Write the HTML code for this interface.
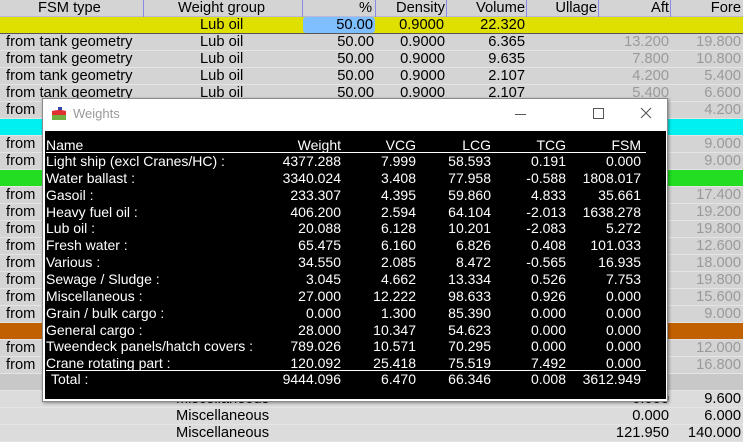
<!DOCTYPE html>
<html><head><meta charset="utf-8"><style>
*{margin:0;padding:0;box-sizing:border-box}
body{width:743px;height:441px;overflow:hidden;background:#d4d4d4;font-family:"Liberation Sans",Arial,sans-serif;font-size:14.7px;color:#000;position:relative}
.r{position:absolute;left:0;width:743px;height:17px;background:#d4d4d4;border-bottom:1px solid #e4e4e4}
.r span{position:absolute;top:0;line-height:16px;white-space:nowrap}
.g{color:#9a9a9a}
.hd{background:#d4d4d4;border-bottom:1px solid #b8b8d8}
.vl{position:absolute;top:0;height:17px;width:1px;background:#8a8ae0}
.dlg{position:absolute;left:42px;top:98px;width:626px;height:304px;background:#fff;border:1px solid #8a8a8a;box-shadow:1px 1px 3px rgba(0,0,0,.4)}
.blk{position:absolute;left:2px;top:32px;width:621px;height:268px;background:#000;color:#fff;font-size:14px}
.blk div{position:absolute;left:0;width:621px;height:17px;line-height:16px}
.blk span{position:absolute;white-space:nowrap}
</style></head><body>

<div class="r hd" style="top:0"><span style="left:38px">FSM type</span><span style="left:178px">Weight group</span><span style="right:371px">%</span><span style="right:298px">Density</span><span style="right:218px">Volume</span><span style="right:146px">Ullage</span><span style="right:74px">Aft</span><span style="right:2px">Fore</span>
<div class="vl" style="left:143px"></div><div class="vl" style="left:302px"></div><div class="vl" style="left:375px"></div><div class="vl" style="left:446px"></div><div class="vl" style="left:526px"></div><div class="vl" style="left:598px"></div><div class="vl" style="left:670px"></div></div>

<div class="r" style="top:17px;background:#e0e000;border-bottom:1px solid #555"><div style="position:absolute;left:303px;top:0;width:72px;height:16px;background:#7fbfff;border-radius:3px"></div><span style="left:200px">Lub oil</span><span style="right:370px">50.00</span><span style="right:299px">0.9000</span><span style="right:218px">22.320</span></div>

<div class="r" style="top:34px"><span style="left:6px">from tank geometry</span><span style="left:200px">Lub oil</span><span style="right:369px">50.00</span><span style="right:298px">0.9000</span><span style="right:218px">6.365</span><span class="g" style="right:74px">13.200</span><span class="g" style="right:2px">19.800</span></div>
<div class="r" style="top:51px"><span style="left:6px">from tank geometry</span><span style="left:200px">Lub oil</span><span style="right:369px">50.00</span><span style="right:298px">0.9000</span><span style="right:218px">9.635</span><span class="g" style="right:74px">7.800</span><span class="g" style="right:2px">10.800</span></div>
<div class="r" style="top:68px"><span style="left:6px">from tank geometry</span><span style="left:200px">Lub oil</span><span style="right:369px">50.00</span><span style="right:298px">0.9000</span><span style="right:218px">2.107</span><span class="g" style="right:74px">4.200</span><span class="g" style="right:2px">5.400</span></div>
<div class="r" style="top:85px"><span style="left:6px">from tank geometry</span><span style="left:200px">Lub oil</span><span style="right:369px">50.00</span><span style="right:298px">0.9000</span><span style="right:218px">2.107</span><span class="g" style="right:74px">5.400</span><span class="g" style="right:2px">6.600</span></div>
<div class="r" style="top:102px"><span style="left:6px">from</span><span class="g" style="right:2px">4.200</span></div>
<div class="r" style="top:119px;background:#00f0f0"></div>
<div class="r" style="top:136px"><span style="left:6px">from</span><span class="g" style="right:2px">9.000</span></div>
<div class="r" style="top:153px"><span style="left:6px">from</span><span class="g" style="right:2px">9.000</span></div>
<div class="r" style="top:170px;background:#22dd22"></div>
<div class="r" style="top:187px"><span style="left:6px">from</span><span class="g" style="right:2px">17.400</span></div>
<div class="r" style="top:204px"><span style="left:6px">from</span><span class="g" style="right:2px">19.200</span></div>
<div class="r" style="top:221px"><span style="left:6px">from</span><span class="g" style="right:2px">19.800</span></div>
<div class="r" style="top:238px"><span style="left:6px">from</span><span class="g" style="right:2px">12.600</span></div>
<div class="r" style="top:255px"><span style="left:6px">from</span><span class="g" style="right:2px">18.000</span></div>
<div class="r" style="top:272px"><span style="left:6px">from</span><span class="g" style="right:2px">19.800</span></div>
<div class="r" style="top:289px"><span style="left:6px">from</span><span class="g" style="right:2px">15.600</span></div>
<div class="r" style="top:306px"><span style="left:6px">from</span><span class="g" style="right:2px">9.000</span></div>
<div class="r" style="top:323px;background:#c06000"></div>
<div class="r" style="top:340px"><span style="left:6px">from</span><span class="g" style="right:2px">12.000</span></div>
<div class="r" style="top:357px"><span style="left:6px">from</span><span class="g" style="right:2px">16.800</span></div>
<div class="r" style="top:374px;background:#c8c8c8"></div>
<div class="r" style="top:391px;background:#dcdcdc"><span style="left:176px">Miscellaneous</span><span style="right:74px">0.000</span><span style="right:2px">9.600</span></div>
<div class="r" style="top:408px;background:#dcdcdc"><span style="left:176px">Miscellaneous</span><span style="right:74px">0.000</span><span style="right:2px">6.000</span></div>
<div class="r" style="top:425px;background:#dcdcdc"><span style="left:176px">Miscellaneous</span><span style="right:74px">121.950</span><span style="right:2px">140.000</span></div>

<div class="dlg">
 <svg style="position:absolute;left:8px;top:8px" width="16" height="14" viewBox="0 0 16 14"><rect x="7" y="0" width="4" height="4" fill="#3344aa"/><path d="M1 4 Q8 2 15 4 L15 8 L1 8 Z" fill="#e03030"/><rect x="1" y="8" width="14" height="5" fill="#70b040"/></svg>
 <div style="position:absolute;left:30px;top:7px;font-size:13px;color:#999">Weights</div>
 <div style="position:absolute;left:472px;top:15px;width:11px;height:1px;background:#555"></div>
 <div style="position:absolute;left:550px;top:9px;width:11px;height:11px;border:1px solid #555"></div>
 <svg style="position:absolute;left:597px;top:8px" width="12" height="12"><path d="M1 1L11 11M11 1L1 11" stroke="#555" stroke-width="1.1"/></svg>
 <div class="blk">
  <div style="top:6px"><span style="left:1px">Name</span><span style="right:325px">Weight</span><span style="right:250px">VCG</span><span style="right:175px">LCG</span><span style="right:100px">TCG</span><span style="right:25px">FSM</span></div>
  <div style="top:21px;height:1px;left:1px;width:600px;background:#fff"></div>
  <div style="top:22px"><span style="left:1px">Light ship (excl Cranes/HC) :</span><span style="right:325px">4377.288</span><span style="right:250px">7.999</span><span style="right:175px">58.593</span><span style="right:100px">0.191</span><span style="right:25px">0.000</span></div>
  <div style="top:39px"><span style="left:1px">Water ballast :</span><span style="right:325px">3340.024</span><span style="right:250px">3.408</span><span style="right:175px">77.958</span><span style="right:100px">-0.588</span><span style="right:25px">1808.017</span></div>
  <div style="top:56px"><span style="left:1px">Gasoil :</span><span style="right:325px">233.307</span><span style="right:250px">4.395</span><span style="right:175px">59.860</span><span style="right:100px">4.833</span><span style="right:25px">35.661</span></div>
  <div style="top:73px"><span style="left:1px">Heavy fuel oil :</span><span style="right:325px">406.200</span><span style="right:250px">2.594</span><span style="right:175px">64.104</span><span style="right:100px">-2.013</span><span style="right:25px">1638.278</span></div>
  <div style="top:89px"><span style="left:1px">Lub oil :</span><span style="right:325px">20.088</span><span style="right:250px">6.128</span><span style="right:175px">10.201</span><span style="right:100px">-2.083</span><span style="right:25px">5.272</span></div>
  <div style="top:106px"><span style="left:1px">Fresh water :</span><span style="right:325px">65.475</span><span style="right:250px">6.160</span><span style="right:175px">6.826</span><span style="right:100px">0.408</span><span style="right:25px">101.033</span></div>
  <div style="top:123px"><span style="left:1px">Various :</span><span style="right:325px">34.550</span><span style="right:250px">2.085</span><span style="right:175px">8.472</span><span style="right:100px">-0.565</span><span style="right:25px">16.935</span></div>
  <div style="top:140px"><span style="left:1px">Sewage / Sludge :</span><span style="right:325px">3.045</span><span style="right:250px">4.662</span><span style="right:175px">13.334</span><span style="right:100px">0.526</span><span style="right:25px">7.753</span></div>
  <div style="top:157px"><span style="left:1px">Miscellaneous :</span><span style="right:325px">27.000</span><span style="right:250px">12.222</span><span style="right:175px">98.633</span><span style="right:100px">0.926</span><span style="right:25px">0.000</span></div>
  <div style="top:174px"><span style="left:1px">Grain / bulk cargo :</span><span style="right:325px">0.000</span><span style="right:250px">1.300</span><span style="right:175px">85.390</span><span style="right:100px">0.000</span><span style="right:25px">0.000</span></div>
  <div style="top:191px"><span style="left:1px">General cargo :</span><span style="right:325px">28.000</span><span style="right:250px">10.347</span><span style="right:175px">54.623</span><span style="right:100px">0.000</span><span style="right:25px">0.000</span></div>
  <div style="top:207px"><span style="left:1px">Tweendeck panels/hatch covers :</span><span style="right:325px">789.026</span><span style="right:250px">10.571</span><span style="right:175px">70.295</span><span style="right:100px">0.000</span><span style="right:25px">0.000</span></div>
  <div style="top:224px"><span style="left:1px">Crane rotating part :</span><span style="right:325px">120.092</span><span style="right:250px">25.418</span><span style="right:175px">75.519</span><span style="right:100px">7.492</span><span style="right:25px">0.000</span></div>
  <div style="top:239px;height:1px;left:1px;width:600px;background:#fff"></div>
  <div style="top:240px"><span style="left:6px">Total :</span><span style="right:325px">9444.096</span><span style="right:250px">6.470</span><span style="right:175px">66.346</span><span style="right:100px">0.008</span><span style="right:25px">3612.949</span></div>
 </div>
</div>
</body></html>
